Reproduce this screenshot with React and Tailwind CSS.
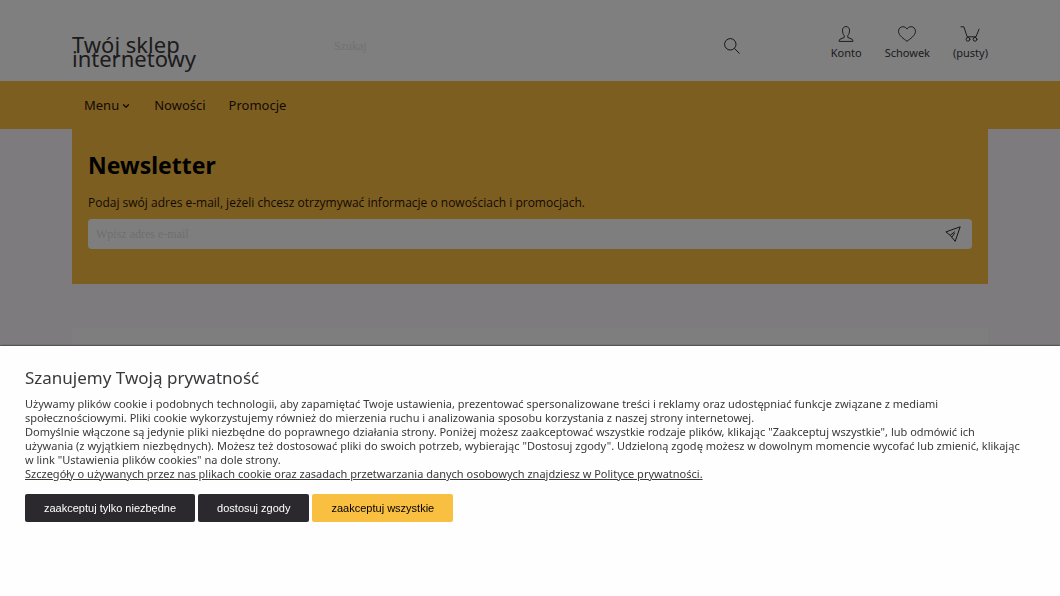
import React, { useState } from "react";
import { ChevronDown } from "lucide-react";

const navLinks = ["Nowości", "Promocje"];

function SearchIcon() {
  return (
    <svg className="h-4 w-4" viewBox="0 0 16 16" fill="none" stroke="currentColor">
      <circle cx="6.3" cy="6.3" r="5.7" />
      <path d="M10.4 10.4 15.6 15.6" />
    </svg>
  );
}

function UserIcon() {
  return (
    <svg className="h-4 w-5" viewBox="0 0 20 16" fill="none" stroke="currentColor" strokeLinejoin="round">
      <path d="M10 .6C7.8 .6 6.5 2 6.5 4.2c0 2.600.7 4.300 1.700 5.300v2L4 13.200c-.7.400-.9 1-.9 2.200h13.800c0-1.200-.2-1.800-.9-2.200l-4.200-1.700V9.500c1-1 1.700-2.700 1.700-5.300C13.500 2 12.200.6 10 .6z" />
    </svg>
  );
}

function HeartIcon() {
  return (
    <svg className="h-4 w-5" viewBox="0 0 20 16" fill="none" stroke="currentColor" strokeLinejoin="round">
      <path d="M10 15.300C7 13 1.500 9.500 1.500 5.300 1.500 2.600 3.500.7 5.900.7 7.600.7 9.200 1.600 10 3.100 10.800 1.600 12.400.7 14.100.7c2.400 0 4.400 1.900 4.400 4.600 0 4.200-5.500 7.700-8.500 10z" />
    </svg>
  );
}

function CartIcon() {
  return (
    <svg className="h-4 w-5" viewBox="0 0 20 16" fill="none" stroke="currentColor" strokeLinecap="round" strokeLinejoin="round">
      <path d="M1 .8h2.800L7.200 10.800h8.800L19 3.200" />
      <circle cx="8" cy="13.300" r="1.900" />
      <circle cx="15" cy="13.300" r="1.900" />
    </svg>
  );
}

function SendIcon() {
  return (
    <svg className="h-4 w-4" viewBox="0 0 16 16" fill="none" stroke="currentColor" strokeLinejoin="round">
      <path d="M15.200.8.900 5.900l4.300 3.400 5 6zM5.200 9.300l4.600-3.600M6.700 11.200l3-4" />
    </svg>
  );
}

const accountLinks = [
  { label: "Konto", icon: UserIcon },
  { label: "Schowek", icon: HeartIcon },
  { label: "(pusty)", icon: CartIcon },
];

function Header() {
  return (
    <header className="bg-white px-[72px]">
      <div className="flex h-[81px] items-center">
        <a href="#" className="mt-5 w-[254px] text-[22px] leading-[14px] text-[#3a383b]">
          Twój sklep
          <br />
          internetowy
        </a>
        <form className="mt-2.5 flex w-[414px] items-center justify-between" onSubmit={(e) => e.preventDefault()}>
          <input
            type="search"
            aria-label="Szukaj"
            placeholder="Szukaj"
            className="min-w-0 flex-1 px-2 font-['Liberation_Serif',serif] text-xs placeholder:text-[#e4e4e4] focus:outline-none"
          />
          <button type="submit" aria-label="Szukaj w sklepie" className="text-[#2b292c]">
            <SearchIcon />
          </button>
        </form>
        <nav className="mt-1.5 ml-auto flex gap-[23px]">
          {accountLinks.map(({ label, icon: Icon }) => (
            <a key={label} href="#" className="flex flex-col items-center gap-[3px] text-[11px] leading-4 text-[#3a383b]">
              <Icon />
              {label}
            </a>
          ))}
        </nav>
      </div>
    </header>
  );
}

function MenuBar() {
  return (
    <nav className="flex h-12 items-center gap-[23px] bg-[#f9bf41] px-[84px] pt-0.5 text-[13px] text-[#301008]">
      <button className="flex items-center gap-0.5">
        Menu
        <ChevronDown className="h-2.5 w-2.5" strokeWidth={3} />
      </button>
      {navLinks.map((link) => (
        <a key={link} href="#">{link}</a>
      ))}
    </nav>
  );
}

function Newsletter() {
  const [email, setEmail] = useState("");

  return (
    <section className="bg-[#f9bf41] px-4 pt-5 pb-[35px]">
      <h2 className="text-[23px] leading-8 font-bold text-black">Newsletter</h2>
      <form onSubmit={(e) => e.preventDefault()}>
        <label htmlFor="newsletter" className="mt-3.5 block font-['Open_Sans',sans-serif] text-xs leading-4 text-[#301008]">
          Podaj swój adres e-mail, jeżeli chcesz otrzymywać informacje o nowościach i promocjach.
        </label>
        <div className="mt-2 flex h-[30px] items-center rounded-sm bg-[#fffcff] pr-[11px]">
          <input
            id="newsletter"
            type="email"
            value={email}
            onChange={(e) => setEmail(e.target.value)}
            placeholder="Wpisz adres e-mail"
            className="min-w-0 flex-1 px-2 font-['Liberation_Serif',serif] text-xs placeholder:text-[#e0dde0] focus:outline-none"
          />
          <button type="submit" aria-label="Zapisz się" className="text-[#2b292c]">
            <SendIcon />
          </button>
        </div>
      </form>
    </section>
  );
}

function CookieConsent() {
  return (
    <div className="fixed inset-0 flex flex-col justify-end bg-black/50">
      <div role="dialog" aria-labelledby="consent-title" className="bg-[#fefefe] pt-5 pr-[39px] pb-[74px] pl-[25px] text-[#3b383c] shadow-[0_0_2px_#000]">
        <h2 id="consent-title" className="text-[17px] leading-6">Szanujemy Twoją prywatność</h2>
        <p className="mt-[7px] text-[11px] leading-[14px]">
          Używamy plików cookie i podobnych technologii, aby zapamiętać Twoje ustawienia, prezentować spersonalizowane treści i reklamy oraz udostępniać funkcje związane z mediami społecznościowymi. Pliki cookie wykorzystujemy również do mierzenia ruchu i analizowania sposobu korzystania z naszej strony internetowej.
          <br />
          Domyślnie włączone są jedynie pliki niezbędne do poprawnego działania strony. Poniżej możesz zaakceptować wszystkie rodzaje plików, klikając "Zaakceptuj wszystkie", lub odmówić ich używania (z wyjątkiem niezbędnych). Możesz też dostosować pliki do swoich potrzeb, wybierając "Dostosuj zgody". Udzieloną zgodę możesz w dowolnym momencie wycofać lub zmienić, klikając w link "Ustawienia plików cookies" na dole strony.
          <br />
          <a href="#" className="underline">
            Szczegóły o używanych przez nas plikach cookie oraz zasadach przetwarzania danych osobowych znajdziesz w Polityce prywatności.
          </a>
        </p>
        <div className="mt-[13px] flex gap-[3px] font-['Liberation_Sans',sans-serif] text-[11px] leading-4">
          <button className="rounded-xs bg-[#2b292d] px-[19px] py-1.5 text-white">zaakceptuj tylko niezbędne</button>
          <button className="rounded-xs bg-[#2b292d] px-[19px] py-1.5 text-white">dostosuj zgody</button>
          <button className="rounded-xs bg-[#f9bf41] px-[19px] py-1.5 text-black">zaakceptuj wszystkie</button>
        </div>
      </div>
    </div>
  );
}

export default function App() {
  return (
    <div className="flex min-h-screen flex-col bg-[#fcf7fd] font-['Noto_Sans',sans-serif]">
      <Header />
      <MenuBar />
      <main className="flex flex-1 flex-col gap-11 px-[72px]">
        <Newsletter />
        <div className="flex-1 bg-[#fffcff]" />
      </main>
      <CookieConsent />
    </div>
  );
}
